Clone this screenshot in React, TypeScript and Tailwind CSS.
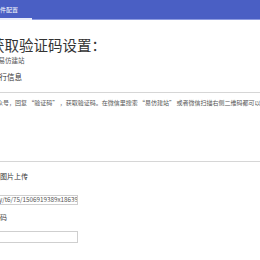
import React from "react";

const cjk = { fontFamily: '"Microsoft YaHei", "Noto Sans CJK SC", "Noto Sans", sans-serif' };

export default function App() {
  return (
    <div className="h-[260px] w-[260px] overflow-hidden bg-white text-[#333]" style={cjk}>
      {/* top bar */}
      <div className="flex h-[20px] border-b border-[#8d9be0] bg-[#4a5fc4]">
        <div className="-ml-[6px] flex h-[20px] w-[38px] items-center border-b-2 border-[#e8ecfb] pt-[1px] text-[6px] text-white">
          插件配置
        </div>
      </div>

      <div className="-ml-[10px] pt-[16px]">
        <h1 className="text-[14.5px] leading-[17px] font-normal text-[#333]">获取验证码设置：</h1>
        <div className="ml-[2px] mt-[2px] text-[6.5px] leading-[10px] text-[#555]">自易仿建站</div>
      </div>

      <div className="-ml-[8px] mt-[7px] text-[7.5px] leading-[10px] text-[#333]">执行信息</div>

      <div className="mt-[10px] border-t border-[#d6d6d6]" />
      <div className="-ml-[9px] mt-[6px] whitespace-nowrap text-[6px] leading-[8px] text-[#555]">
        公众号，回复 “验证码” ，获取验证码。在微信里搜索 “易仿建站” 或者微信扫描右侧二维码都可以获取
      </div>

      <div className="mt-[54px] border-t border-[#d6d6d6]" />
      <div className="-ml-[7px] mt-[9px] text-[7px] leading-[10px] text-[#333]">码图片上传</div>
      <div className="-ml-[4px] mt-[14px] flex h-[10px] w-[82px] items-center overflow-hidden whitespace-nowrap border border-[#cfcfcf] text-[6.3px] leading-[8px] text-[#555]">
        <span className="pl-[2px]">y/t6/75/1506919389x18639</span>
      </div>
      <div className="-ml-[14px] mt-[7px] text-[7px] leading-[10px] text-[#444]">验证码</div>
      <div className="-ml-[4px] mt-[9px] h-[12px] w-[82px] border border-[#cfcfcf]" />
    </div>
  );
}
